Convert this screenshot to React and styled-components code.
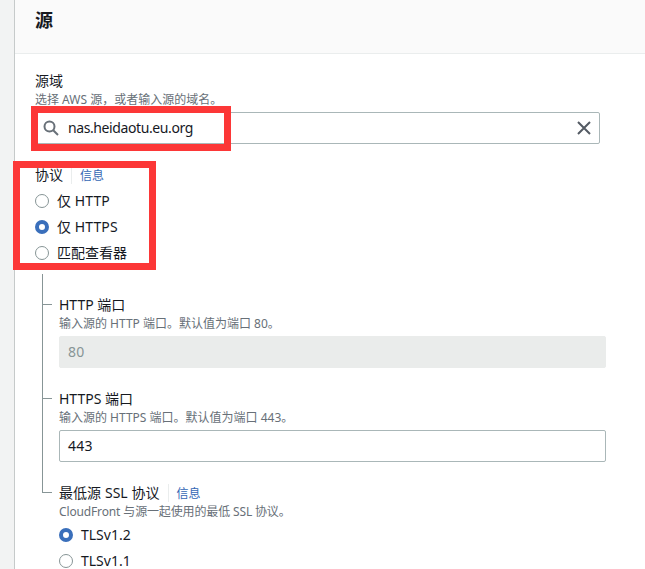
import React from "react";
import styled, { createGlobalStyle } from "styled-components";

const GlobalStyle = createGlobalStyle`
  * { box-sizing: border-box; }
  body {
    margin: 0;
    background: #f2f3f3;
    font-family: "Noto Sans", "Noto Sans CJK SC", sans-serif;
    color: #16191f;
    overflow: hidden;
  }
`;

const Page = styled.div`
  position: relative;
  height: 569px;
  padding-left: 14px;
  overflow: hidden;
`;

const Panel = styled.section`
  height: 100%;
  background: #fff;
  border-left: 1px solid #c6caca;
`;

const PanelHeader = styled.header`
  height: 54px;
  padding: 6px 20px 0;
  background: #fafafa;
  border-bottom: 1px solid #eaeded;
`;

const Title = styled.h2`
  margin: 0;
  font-size: 18px;
  line-height: 28px;
  font-weight: 700;
`;

const PanelBody = styled.div`
  padding: 16px 20px 0;
`;

const Field = styled.div`
  margin-bottom: ${(p) => p.$gap || 0}px;
`;

const LabelRow = styled.div`
  display: flex;
  align-items: center;
  height: 22px;
`;

const Label = styled.span`
  font-size: 14px;
  line-height: 22px;
  white-space: nowrap;
  letter-spacing: ${(p) => p.$spacing || 0}px;
`;

const InfoLink = styled.a`
  height: 18px;
  margin-left: 8px;
  padding: 1px 0 0 8px;
  border-left: 1px solid #eaeded;
  font-size: 12px;
  line-height: 18px;
  color: #3568b5;
`;

const Description = styled.div`
  height: 15px;
  margin-bottom: 5px;
  font-size: 12px;
  line-height: 15px;
  color: #687078;
  white-space: nowrap;
  letter-spacing: ${(p) => p.$spacing || 0}px;
`;

const InputBox = styled.div`
  display: flex;
  align-items: center;
  width: ${(p) => p.$width}px;
  height: 32px;
  padding: 0 ${(p) => p.$padX || 8}px;
  font-size: 14px;
  line-height: 22px;
  letter-spacing: ${(p) => p.$spacing || 0}px;
  border: 1px solid ${(p) => (p.$disabled ? "#eaeceb" : "#aab7b8")};
  border-radius: 2px;
  background: ${(p) => (p.$disabled ? "#eaeceb" : "#fff")};
  color: ${(p) => (p.$disabled ? "#879596" : "#16191f")};
`;

const InputText = styled.span`
  flex: 1;
`;

const Icon = styled.svg`
  flex: none;
  width: 16px;
  height: 16px;
  margin-right: ${(p) => p.$after || 0}px;
  fill: none;
  stroke: ${(p) => p.$color};
  stroke-width: 2;
`;

const RadioList = styled.div`
  margin-top: ${(p) => p.$top}px;
`;

const RadioRow = styled.div`
  display: flex;
  align-items: center;
  gap: 8px;
  height: 26px;
`;

const RadioMark = styled.span`
  width: 14px;
  height: 14px;
  border-radius: 50%;
  border: ${(p) => (p.$checked ? "4px solid #3a6fbb" : "1px solid #879596")};
  background: #fff;
`;

const Tree = styled.div`
  margin: 8px 0 0 7px;
`;

const Branch = styled.div`
  display: flex;
`;

const Rail = styled.div`
  display: flex;
  flex-direction: column;
  width: 10px;
  margin-right: 7px;
`;

const RailTick = styled.div`
  height: 31px;
  border-left: 1px solid #879596;
  border-bottom: 1px solid #879596;
`;

const RailStem = styled.div`
  flex: 1;
  border-left: 1px solid #879596;
`;

const BranchContent = styled.div`
  padding-top: 20px;
`;

const Highlight = styled.div`
  position: absolute;
  left: ${(p) => p.$x}px;
  top: ${(p) => p.$y}px;
  width: ${(p) => p.$w}px;
  height: ${(p) => p.$h}px;
  border: 7px solid #fc3737;
  pointer-events: none;
`;

function Radio({ checked, spacing, children }) {
  return (
    <RadioRow>
      <RadioMark $checked={checked} />
      <Label $spacing={spacing}>{children}</Label>
    </RadioRow>
  );
}

function TreeNode({ last, children }) {
  return (
    <Branch>
      <Rail>
        <RailTick />
        {!last && <RailStem />}
      </Rail>
      <BranchContent>{children}</BranchContent>
    </Branch>
  );
}

export default function App() {
  return (
    <Page>
      <GlobalStyle />
      <Panel>
        <PanelHeader>
          <Title>源</Title>
        </PanelHeader>
        <PanelBody>
          <Field $gap={20}>
            <LabelRow>
              <Label>源域</Label>
            </LabelRow>
            <Description>选择 AWS 源，或者输入源的域名。</Description>
            <InputBox $width={565} $padX={7} $spacing={-0.4}>
              <Icon viewBox="0 0 16 16" $color="#687078" $after={9}>
                <circle cx="6.5" cy="6.5" r="5" />
                <path d="M10.2 10.2 15 15" />
              </Icon>
              <InputText>nas.heidaotu.eu.org</InputText>
              <Icon viewBox="0 0 16 16" $color="#545b64">
                <path d="M2 2 14 14M14 2 2 14" />
              </Icon>
            </InputBox>
          </Field>
          <Field>
            <LabelRow>
              <Label>协议</Label>
              <InfoLink>信息</InfoLink>
            </LabelRow>
            <RadioList $top={2}>
              <Radio spacing={0.1}>仅 HTTP</Radio>
              <Radio checked spacing={0.1}>仅 HTTPS</Radio>
              <Radio>匹配查看器</Radio>
            </RadioList>
          </Field>
          <Tree>
            <TreeNode>
              <LabelRow>
                <Label>HTTP 端口</Label>
              </LabelRow>
              <Description>输入源的 HTTP 端口。默认值为端口 80。</Description>
              <InputBox $width={547} $disabled $spacing={0.2}>
                80
              </InputBox>
            </TreeNode>
            <TreeNode>
              <LabelRow>
                <Label>HTTPS 端口</Label>
              </LabelRow>
              <Description>输入源的 HTTPS 端口。默认值为端口 443。</Description>
              <InputBox $width={547} $spacing={0.2}>443</InputBox>
            </TreeNode>
            <TreeNode last>
              <LabelRow>
                <Label $spacing={0.06}>最低源 SSL 协议</Label>
                <InfoLink>信息</InfoLink>
              </LabelRow>
              <Description $spacing={-0.14}>
                CloudFront 与源一起使用的最低 SSL 协议。
              </Description>
              <RadioList $top={-2}>
                <Radio checked>TLSv1.2</Radio>
                <Radio>TLSv1.1</Radio>
              </RadioList>
            </TreeNode>
          </Tree>
        </PanelBody>
      </Panel>
      <Highlight $x={31} $y={106} $w={200} $h={45} />
      <Highlight $x={13} $y={161} $w={143} $h={109} />
    </Page>
  );
}
